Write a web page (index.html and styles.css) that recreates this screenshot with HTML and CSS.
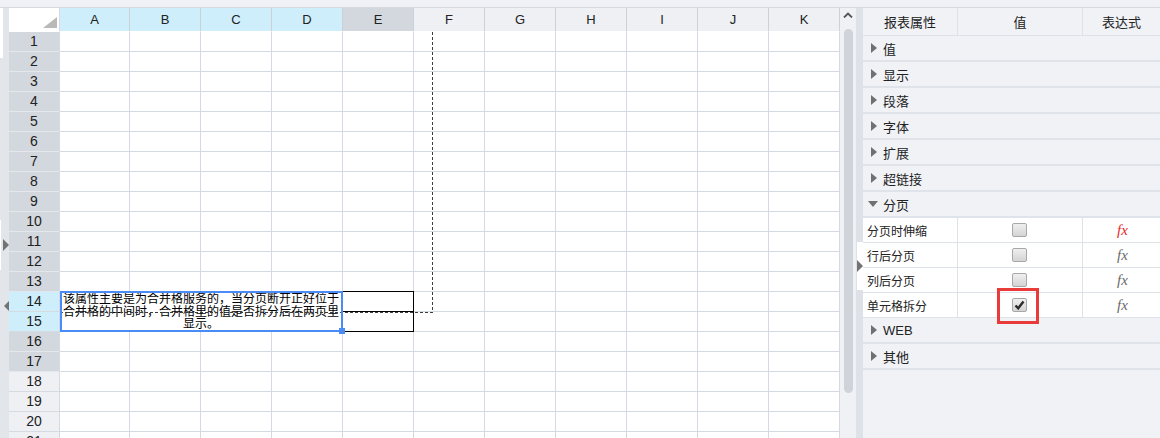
FILE: index.html
```html
<!DOCTYPE html>
<html lang="zh-CN">
<head>
  <meta charset="UTF-8">
  <title>报表属性 - 分页</title>
  <link rel="stylesheet" href="styles.css">
</head>
<body>
  <div class="topbar"></div>
  <div class="main">
    <!-- 左侧折叠条 -->
    <div class="gutter">
      <span class="gutter-strip"></span>
      <div class="gutter-handle">
        <span class="gutter-strip tall"></span>
        <span class="caret-right"></span>
      </div>
      <span class="caret-left"></span>
    </div>

    <!-- 表格区域 -->
    <div class="sheet">
      <div class="grid"></div>
      <div class="page-break-v"></div>
      <div class="page-break-h"></div>
      <div class="selection"></div>
      <span class="fill-handle"></span>
    </div>

    <div class="vscroll">
      <svg class="scroll-up" width="10" height="6" viewBox="0 0 10 6">
        <path d="M1 5.5 L5 1.5 L9 5.5" fill="none" stroke="#555" stroke-width="1.8"/>
      </svg>
      <div class="thumb"></div>
    </div>

    <div class="splitter">
      <div class="split-handle"><span class="caret-right"></span></div>
    </div>

    <!-- 属性面板 -->
    <div class="panel">
      <div class="panel-head">
        <span>报表属性</span>
        <span>值</span>
        <span>表达式</span>
      </div>
      <div class="group"><i class="caret"></i>值</div>
      <div class="group"><i class="caret"></i>显示</div>
      <div class="group"><i class="caret"></i>段落</div>
      <div class="group"><i class="caret"></i>字体</div>
      <div class="group"><i class="caret"></i>扩展</div>
      <div class="group"><i class="caret"></i>超链接</div>
      <div class="group open"><i class="caret"></i>分页</div>
      <div class="prop">
        <div class="prop-name">分页时伸缩</div>
        <div class="prop-value"><span class="check"></span></div>
        <div class="prop-expr"><span class="fx active">fx</span></div>
      </div>
      <div class="prop">
        <div class="prop-name">行后分页</div>
        <div class="prop-value"><span class="check"></span></div>
        <div class="prop-expr"><span class="fx">fx</span></div>
      </div>
      <div class="prop">
        <div class="prop-name">列后分页</div>
        <div class="prop-value"><span class="check"></span></div>
        <div class="prop-expr"><span class="fx">fx</span></div>
      </div>
      <div class="prop">
        <div class="prop-name">单元格拆分</div>
        <div class="prop-value">
          <span class="check">
            <svg width="11" height="10" viewBox="0 0 11 10">
              <path d="M1.5 5.5 L4.2 8.3 L9.5 1.5" fill="none" stroke="#2b2b2b" stroke-width="2.4"/>
            </svg>
          </span>
        </div>
        <div class="prop-expr"><span class="fx">fx</span></div>
      </div>
      <div class="group"><i class="caret"></i>WEB</div>
      <div class="group"><i class="caret"></i>其他</div>

      <div class="highlight"></div>
    </div>
  </div>

  <script>
    // 生成表格：表头 + 21 行
    const cols = ['A', 'B', 'C', 'D', 'E', 'F', 'G', 'H', 'I', 'J', 'K']
    const tip = '该属性主要是为合并格服务的，当分页断开正好位于合并格的中间时，合并格里的值是否拆分后在两页里显示。'
    let html = '<div class="corner"><span></span></div>'

    cols.forEach((c, i) => {
      let cls = 'colhead'
      if (i < 4) cls += ' picked'
      else if (i === 4) cls += ' dim'
      html += `<div class="${cls}">${c}</div>`
    })

    for (let r = 1; r <= 21; r++) {
      let cls = 'rowhead'
      if (r === 14 || r === 15) cls += ' picked'
      else if (r <= 17) cls += ' dim'
      html += `<div class="${cls}">${r}</div>`

      // A14:D15 合并格
      if (r === 14) html += `<div class="cell merged">${tip}</div>`

      cols.forEach((c, i) => {
        if ((r === 14 || r === 15) && i < 4) return
        let cc = 'cell'
        if (i === 4 && r === 14) cc += ' boxed boxed-top'
        if (i === 4 && r === 15) cc += ' boxed'
        html += `<div class="${cc}"></div>`
      })
    }

    document.querySelector('.grid').innerHTML = html
  </script>
</body>
</html>
```

FILE: styles.css
```css
* {
  box-sizing: border-box;
}

body {
  margin: 0;
  width: 1160px;
  height: 438px;
  overflow: hidden;
  background: #f0f1f5;
  font-family: "Liberation Sans", "Noto Sans CJK SC", sans-serif;
  color: #222;
}

.topbar {
  height: 8px;
  border-bottom: 1px solid #d5d8de;
}

.main {
  display: flex;
  height: 430px;
}

/* 左侧折叠条 */
.gutter {
  width: 9px;
  background: #e2e5ea;
  display: flex;
  flex-direction: column;
}
.gutter-strip {
  display: block;
  width: 3px;
  height: 50px;
  background: #fff;
}
.gutter-handle {
  margin-top: 162px;
  display: flex;
  align-items: center;
  gap: 2px;
}
.caret-right {
  width: 0;
  height: 0;
  border-left: 6px solid #737373;
  border-top: 6px solid transparent;
  border-bottom: 6px solid transparent;
}
.caret-left {
  margin: 30px 0 0 4px;
  width: 0;
  height: 0;
  border-right: 6px solid #737373;
  border-top: 6px solid transparent;
  border-bottom: 6px solid transparent;
}

/* 表格 */
.sheet {
  width: 831px;
  position: relative;
  overflow: hidden;
  background: #fff;
}
.grid {
  display: grid;
  grid-template-columns: 51px 70px repeat(10, 71px);
  grid-template-rows: 24px;
  grid-auto-rows: 20px;
  font-size: 13px;
}
.corner {
  background: #fff;
  border-right: 1px solid #d4d9e2;
  border-bottom: 1px solid #fff;
  display: flex;
  justify-content: flex-end;
  align-items: flex-end;
  padding: 0 2px 3px 0;
}
.corner span {
  width: 0;
  height: 0;
  border-left: 14px solid transparent;
  border-bottom: 11px solid #b9b9b9;
}
.colhead {
  background: #eef0f4;
  border-right: 1px solid #cdd0d6;
  border-bottom: 1px solid #fff;
  text-align: center;
  line-height: 23px;
}
.rowhead {
  background: #eef0f4;
  border-right: 1px solid #d4d9e2;
  border-bottom: 1px solid #d6dae1;
  text-align: center;
  line-height: 19px;
  font-size: 14px;
}
.colhead.dim,
.rowhead.dim {
  background: #d3d7de;
}
.rowhead.dim {
  border-bottom-color: #e4e7ec;
}
.colhead.picked,
.rowhead.picked {
  background: #cdeefa;
}
.cell {
  background: #fff;
  border-right: 1px solid #d4dae4;
  border-bottom: 1px solid #d4dae4;
}
.cell.merged {
  grid-column: 2 / 6;
  grid-row: 15 / 17;
  font-family: "Noto Sans CJK SC", sans-serif;
  font-size: 12px;
  line-height: 12.5px;
  text-align: center;
  color: #000;
}
.cell.boxed {
  border-right-color: #000;
  border-bottom-color: #000;
  box-shadow: -1px 0 0 #000;
}
.cell.boxed-top {
  box-shadow: -1px 0 0 #000, 0 -1px 0 #000, -1px -1px 0 #000;
}

/* 分页线、选区 */
.page-break-v {
  position: absolute;
  left: 423px;
  top: 24px;
  width: 1px;
  height: 281px;
  background: repeating-linear-gradient(to bottom, #3c3c3c 0 3px, transparent 3px 5px);
}
.page-break-h {
  position: absolute;
  left: 51px;
  top: 304px;
  width: 373px;
  height: 1px;
  background: repeating-linear-gradient(to right, #3c3c3c 0 3px, transparent 3px 5px);
}
.selection {
  position: absolute;
  left: 51px;
  top: 283px;
  width: 283px;
  height: 41px;
  border: 2px solid #4a8cf7;
}
.fill-handle {
  position: absolute;
  left: 330px;
  top: 320px;
  width: 6px;
  height: 6px;
  background: #4a8cf7;
}

/* 滚动条 */
.vscroll {
  width: 16px;
  background: #eff1f5;
  display: flex;
  flex-direction: column;
  align-items: center;
  padding-top: 4px;
}
.thumb {
  margin-top: 11px;
  width: 9px;
  height: 364px;
  border-radius: 5px;
  background: #cfd3da;
}

.splitter {
  width: 7px;
  background: #dde1e8;
}
.split-handle {
  margin: 234px 0 0 1px;
  width: 6px;
  height: 48px;
  background: #fff;
  display: flex;
  align-items: center;
}

/* 属性面板 */
.panel {
  flex: 1;
  position: relative;
  background: #f0f2f6;
  font-family: "Noto Sans CJK SC", sans-serif;
  font-size: 13px;
}
.panel-head {
  display: grid;
  grid-template-columns: 95px 125px 1fr;
  height: 28px;
  border-bottom: 1px solid #dde2e9;
}
.panel-head span {
  line-height: 27px;
  text-align: center;
  border-right: 1px solid #dde2e9;
}
.panel-head span:last-child {
  border-right: none;
}
.group {
  height: 26px;
  border-bottom: 2px solid #dfe3ea;
  display: flex;
  align-items: center;
  gap: 6px;
  padding-left: 8px;
  font-family: "Liberation Sans", "Noto Sans CJK SC", sans-serif;
}
.group .caret {
  width: 0;
  height: 0;
  border-left: 6px solid #707070;
  border-top: 5px solid transparent;
  border-bottom: 5px solid transparent;
}
.group.open {
  padding-left: 5px;
  gap: 5px;
}
.group.open .caret {
  border-top: 6px solid #707070;
  border-left: 5px solid transparent;
  border-right: 5px solid transparent;
  border-bottom: none;
}
.prop {
  display: grid;
  grid-template-columns: 95px 125px 1fr;
  height: 25px;
  background: #fff;
  border-bottom: 1px solid #dde1e8;
}
.prop > div {
  display: flex;
  align-items: center;
  border-right: 1px solid #dde1e8;
}
.prop > div:last-child {
  border-right: none;
}
.prop-name {
  padding-left: 4px;
  font-size: 12px;
}
.prop-value,
.prop-expr {
  justify-content: center;
}
.check {
  width: 15px;
  height: 14px;
  border: 1px solid #a8a8a8;
  border-radius: 2px;
  background: linear-gradient(#efefef, #d4d4d4);
  display: flex;
  align-items: center;
  justify-content: center;
  margin-right: 2px;
}
.fx {
  font-family: "Liberation Serif", serif;
  font-style: italic;
  font-size: 15px;
  color: #6a6a6a;
  margin-left: 2px;
}
.fx.active {
  color: #e52a2a;
}
.highlight {
  position: absolute;
  left: 134px;
  top: 280px;
  width: 42px;
  height: 36px;
  border: 3px solid #ea3b3b;
}
```
